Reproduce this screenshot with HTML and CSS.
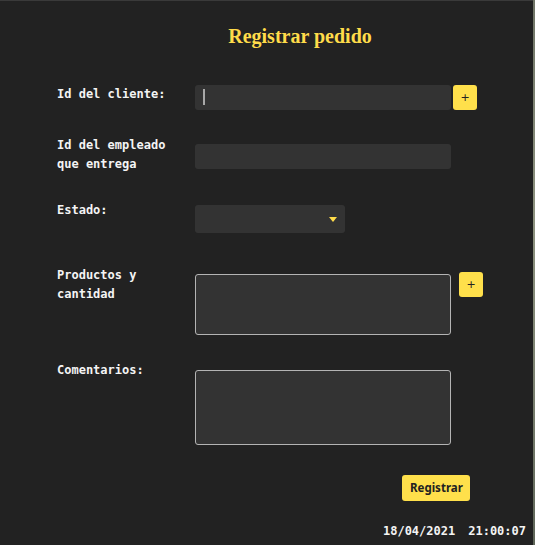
FILE: index.html
```html
<!DOCTYPE html>
<html lang="es">
<head>
<meta charset="utf-8">
<title>Registrar pedido</title>
<link rel="stylesheet" href="styles.css">
</head>
<body>
<div class="panel">
  <h2 class="title">Registrar pedido</h2>
  <form class="form">
    <div class="row row-1">
      <label class="label">Id del cliente:</label>
      <div class="field">
        <div class="input focused"><span class="caret"></span></div>
        <button type="button" class="plus plus-inline">+</button>
      </div>
    </div>
    <div class="row row-2">
      <label class="label">Id del empleado<br>que entrega</label>
      <div class="field field-2">
        <div class="input"></div>
      </div>
    </div>
    <div class="row row-3">
      <label class="label">Estado:</label>
      <div class="field field-3">
        <div class="select"><span class="arrow"></span></div>
      </div>
    </div>
    <div class="row row-4">
      <label class="label">Productos y<br>cantidad</label>
      <div class="field field-4">
        <div class="textarea ta-products"></div>
        <button type="button" class="plus plus-side">+</button>
      </div>
    </div>
    <div class="row row-5">
      <label class="label">Comentarios:</label>
      <div class="field field-5">
        <div class="textarea ta-comments"></div>
      </div>
    </div>
    <div class="actions">
      <button type="button" class="submit">Registrar</button>
    </div>
  </form>
  <div class="clock"><span>18/04/2021</span><span>21:00:07</span></div>
</div>
</body>
</html>
```

FILE: styles.css
```css
* { box-sizing: border-box; }

html, body {
  margin: 0;
  padding: 0;
  height: 545px;
  overflow: hidden;
}

body {
  background: linear-gradient(180deg, #6f7466 0%, #8d927f 40%, #7b8170 70%, #5e6558 100%);
}

.panel {
  width: 533px;
  height: 545px;
  background: #222222;
  border-top: 1px solid #3a3a3a;
  position: relative;
  font-family: "DejaVu Sans Mono", "Liberation Mono", monospace;
  color: #f4f4f4;
}

.title {
  margin: 0;
  padding: 23px 0 0 67px;
  text-align: center;
  font-family: "Liberation Serif", "Times New Roman", serif;
  font-weight: bold;
  font-size: 20px;
  line-height: 24px;
  color: #ffdc4a;
}

.form {
  padding-left: 57px;
}

.row {
  display: flex;
  align-items: flex-start;
}

.label {
  width: 138px;
  flex: none;
  font-size: 12px;
  font-weight: bold;
  line-height: 19px;
  color: #f4f4f4;
}

.field {
  display: flex;
  align-items: flex-start;
}

.row-1 { margin-top: 37px; }
.row-2 { margin-top: 26px; }
.row-3 { margin-top: 27px; }
.row-4 { margin-top: 33px; }
.row-5 { margin-top: 26px; }

.field-2 { margin-top: 8px; }
.field-3 { margin-top: 4px; }
.field-4 { margin-top: 6px; }
.field-5 { margin-top: 9px; }

.input {
  width: 256px;
  height: 25px;
  background: #333333;
  border-radius: 3px;
  position: relative;
}

.caret {
  position: absolute;
  left: 8px;
  top: 4px;
  width: 2px;
  height: 16px;
  background: #a8a8a8;
}

.select {
  width: 150px;
  height: 28px;
  background: #333333;
  border-radius: 3px;
  position: relative;
}

.arrow {
  position: absolute;
  right: 8px;
  top: 12px;
  width: 0;
  height: 0;
  border-left: 4px solid transparent;
  border-right: 4px solid transparent;
  border-top: 5px solid #ffdc4a;
}

.textarea {
  width: 256px;
  background: #333333;
  border: 1px solid #b4b4b4;
  border-radius: 3px;
}

.ta-products { height: 61px; margin-top: 2px; }
.ta-comments { height: 75px; }

.plus {
  width: 24px;
  height: 25px;
  padding: 0;
  border: none;
  border-radius: 3px;
  background: #ffe04b;
  color: #222;
  font-family: "DejaVu Sans", sans-serif;
  font-size: 11px;
  line-height: 25px;
  text-align: center;
}

.plus-inline { margin-left: 2px; }
.plus-side { margin-left: 8px; }

.actions {
  display: flex;
  justify-content: flex-end;
  width: 413px;
  margin-top: 30px;
}

.submit {
  height: 26px;
  padding: 0 8px;
  width: 68px;
  border: none;
  border-radius: 3px;
  background: #ffe04b;
  color: #222;
  font-family: "Noto Sans", "Liberation Sans", sans-serif;
  font-weight: bold;
  font-size: 11.5px;
  line-height: 26px;
}

.clock {
  display: flex;
  justify-content: flex-end;
  gap: 13px;
  padding-right: 7px;
  margin-top: 21px;
  font-size: 12px;
  font-weight: bold;
  line-height: 19px;
  color: #f4f4f4;
}
```
